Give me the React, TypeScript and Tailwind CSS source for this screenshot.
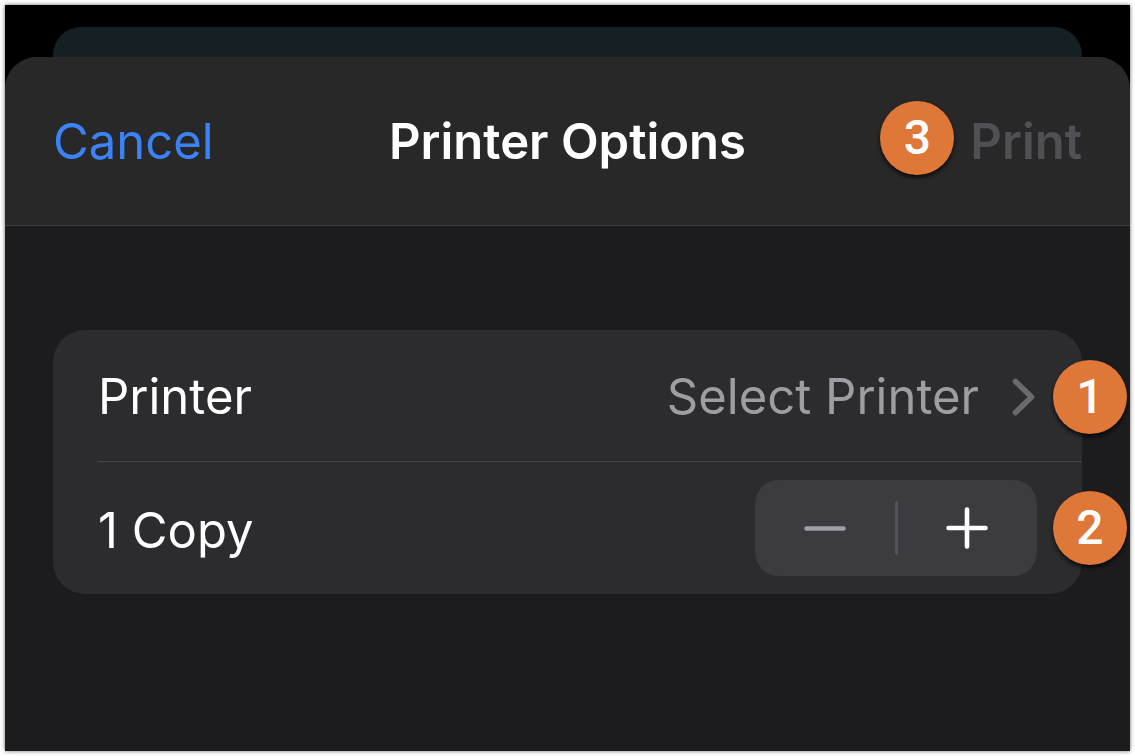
import React, { useState } from 'react';

const Badge: React.FC<{ step: number; className?: string }> = ({ step, className = '' }) => (
  <span
    className={`flex h-[74px] w-[74px] shrink-0 items-center justify-center rounded-full bg-[#de7737] font-[Roboto,sans-serif] text-5xl font-medium text-white shadow-[0_3px_4px_rgba(0,0,0,0.7)] ${className}`}
  >
    {step}
  </span>
);

const App: React.FC = () => {
  const [copies, setCopies] = useState(1);

  return (
    <div className="flex min-h-screen flex-col bg-white p-[5px] font-[Inter,'Liberation_Sans',sans-serif] text-[49px] leading-none text-white">
      <div className="flex flex-1 flex-col bg-black pt-[22px] shadow-[0_0_4px_rgba(0,0,0,0.6)]">
        {/* sheet that sits behind the options */}
        <div className="mx-12 h-[30px] rounded-t-[28px] bg-[#152025]" />

        <main className="flex flex-1 flex-col rounded-t-[32px] bg-[#1c1c1e]">
          <header className="grid h-[169px] grid-cols-[1fr_auto_1fr] items-center rounded-t-[32px] border-b border-[#3d3d40] bg-[#282828] px-12">
            <button type="button" className="justify-self-start text-[#3b82f7]">
              Cancel
            </button>
            <h1 className="font-semibold">Printer Options</h1>
            <div className="flex items-center gap-4 justify-self-end">
              <Badge step={3} className="mb-1.5" />
              <button type="button" disabled className="font-semibold text-[#505054]">
                Print
              </button>
            </div>
          </header>

          <section className="mx-12 mt-[104px] rounded-[32px] bg-[#2c2c2e]">
            <div className="relative flex h-[131px] items-center justify-between px-[45px] pt-0.5">
              <span id="printer-label">Printer</span>
              <button
                type="button"
                aria-describedby="printer-label"
                className="flex items-center gap-8 text-[#9d9da3]"
              >
                Select Printer
                <svg width="26" height="38" viewBox="0 0 26 38" fill="none" className="text-[#6a6a6d]" aria-hidden="true">
                  <path d="M4.5 3.5 20.5 19 4.5 34.5" stroke="currentColor" strokeWidth="5.6" strokeLinecap="round" strokeLinejoin="round" />
                </svg>
              </button>
              <Badge step={1} className="absolute -right-[45px]" />
            </div>

            <hr className="ml-[45px] border-t border-[#444447]" />

            <div className="relative flex h-[132px] items-center justify-between px-[45px]">
              <span className="pt-1">
                {copies} {copies === 1 ? 'Copy' : 'Copies'}
              </span>
              <div className="flex h-24 w-[282px] items-center rounded-3xl bg-[#3c3b40]">
                <button
                  type="button"
                  aria-label="Fewer copies"
                  disabled={copies === 1}
                  onClick={() => setCopies(copies - 1)}
                  className="flex h-full flex-1 items-center justify-center text-white disabled:text-[#a09fa5]"
                >
                  <svg width="42" height="42" viewBox="0 0 42 42" fill="none" aria-hidden="true">
                    <path d="M2.5 21.5H39.5" stroke="currentColor" strokeWidth="4.4" strokeLinecap="round" />
                  </svg>
                </button>
                <span className="h-[54px] w-[3px] rounded-full bg-[#525157]" />
                <button
                  type="button"
                  aria-label="More copies"
                  onClick={() => setCopies(copies + 1)}
                  className="flex h-full flex-1 items-center justify-center"
                >
                  <svg width="42" height="42" viewBox="0 0 42 42" fill="none" aria-hidden="true">
                    <path d="M2.5 21H39.5M21 2.5V39.5" stroke="currentColor" strokeWidth="4.6" strokeLinecap="round" />
                  </svg>
                </button>
              </div>
              <Badge step={2} className="absolute -right-[45px]" />
            </div>
          </section>
        </main>
      </div>
    </div>
  );
};

export default App;
